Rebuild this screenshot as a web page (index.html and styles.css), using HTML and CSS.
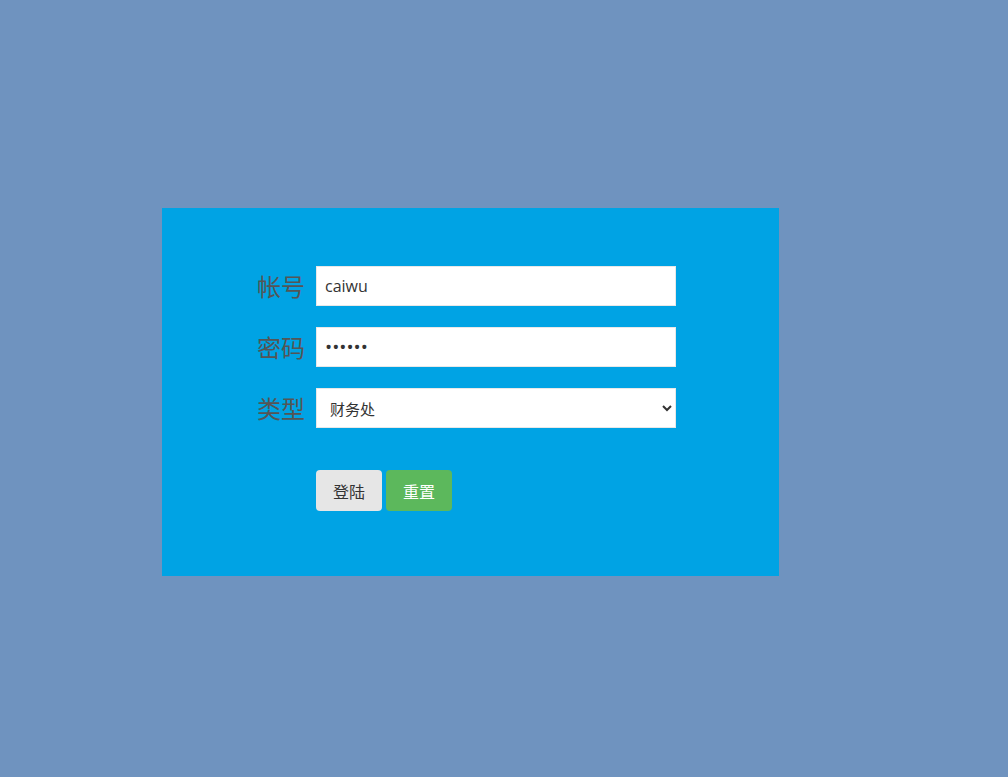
FILE: index.html
```html
<!DOCTYPE html>
<html lang="zh">
<head>
<meta charset="utf-8">
<title>登陆</title>
<link rel="stylesheet" href="styles.css">
</head>
<body>
<div class="panel">
  <form class="login">
    <label class="lbl" for="u">帐号</label>
    <input id="u" class="field" type="text" value="caiwu">
    <label class="lbl" for="p">密码</label>
    <input id="p" class="field pwd" type="password" value="123456">
    <label class="lbl" for="t">类型</label>
    <select id="t" class="field sel">
      <option>财务处</option>
      <option>教务处</option>
    </select>
    <span></span>
    <div class="btns">
      <button type="button" class="btn btn-login">登陆</button>
      <button type="reset" class="btn btn-reset">重置</button>
    </div>
  </form>
</div>
</body>
</html>
```

FILE: styles.css
```css
html, body {
  margin: 0;
  padding: 0;
  height: 100%;
}
body {
  background: #6f93bf;
  font-family: "Noto Sans CJK SC", "Noto Sans", sans-serif;
  padding-top: 208px;
  padding-left: 162px;
  box-sizing: border-box;
}
.panel {
  width: 617px;
  height: 368px;
  background: #00a3e4;
  box-sizing: border-box;
  padding-top: 58px;
}
.login {
  display: grid;
  grid-template-columns: 143px 360px;
  column-gap: 11px;
  row-gap: 21px;
  align-items: center;
}
.lbl {
  text-align: right;
  font-size: 24px;
  color: #555;
  line-height: 40px;
}
.field {
  height: 40px;
  box-sizing: border-box;
  border: 1px solid #e8e8e8;
  background: #fff;
  padding: 0 8px;
  font-family: "Open Sans", "Noto Sans CJK SC", sans-serif;
  font-size: 16px;
  color: #333;
  margin: 0;
  outline: none;
}
.pwd {
  font-family: "Open Sans", sans-serif;
  font-size: 19px;
  letter-spacing: 0;
}
.sel {
  font-family: "Noto Sans CJK SC", sans-serif;
  font-size: 15px;
  padding-left: 9px;
  border-radius: 0;
}
.btns {
  margin-top: 21px;
  display: flex;
  gap: 4px;
}
.btn {
  width: 66px;
  height: 41px;
  border: none;
  border-radius: 4px;
  font-family: "Noto Sans CJK SC", "Noto Sans", sans-serif;
  font-size: 16px;
  padding: 0;
  cursor: pointer;
}
.btn-login {
  background: #e6e6e6;
  color: #333;
}
.btn-reset {
  background: #5cb85c;
  color: #fff;
}
```
